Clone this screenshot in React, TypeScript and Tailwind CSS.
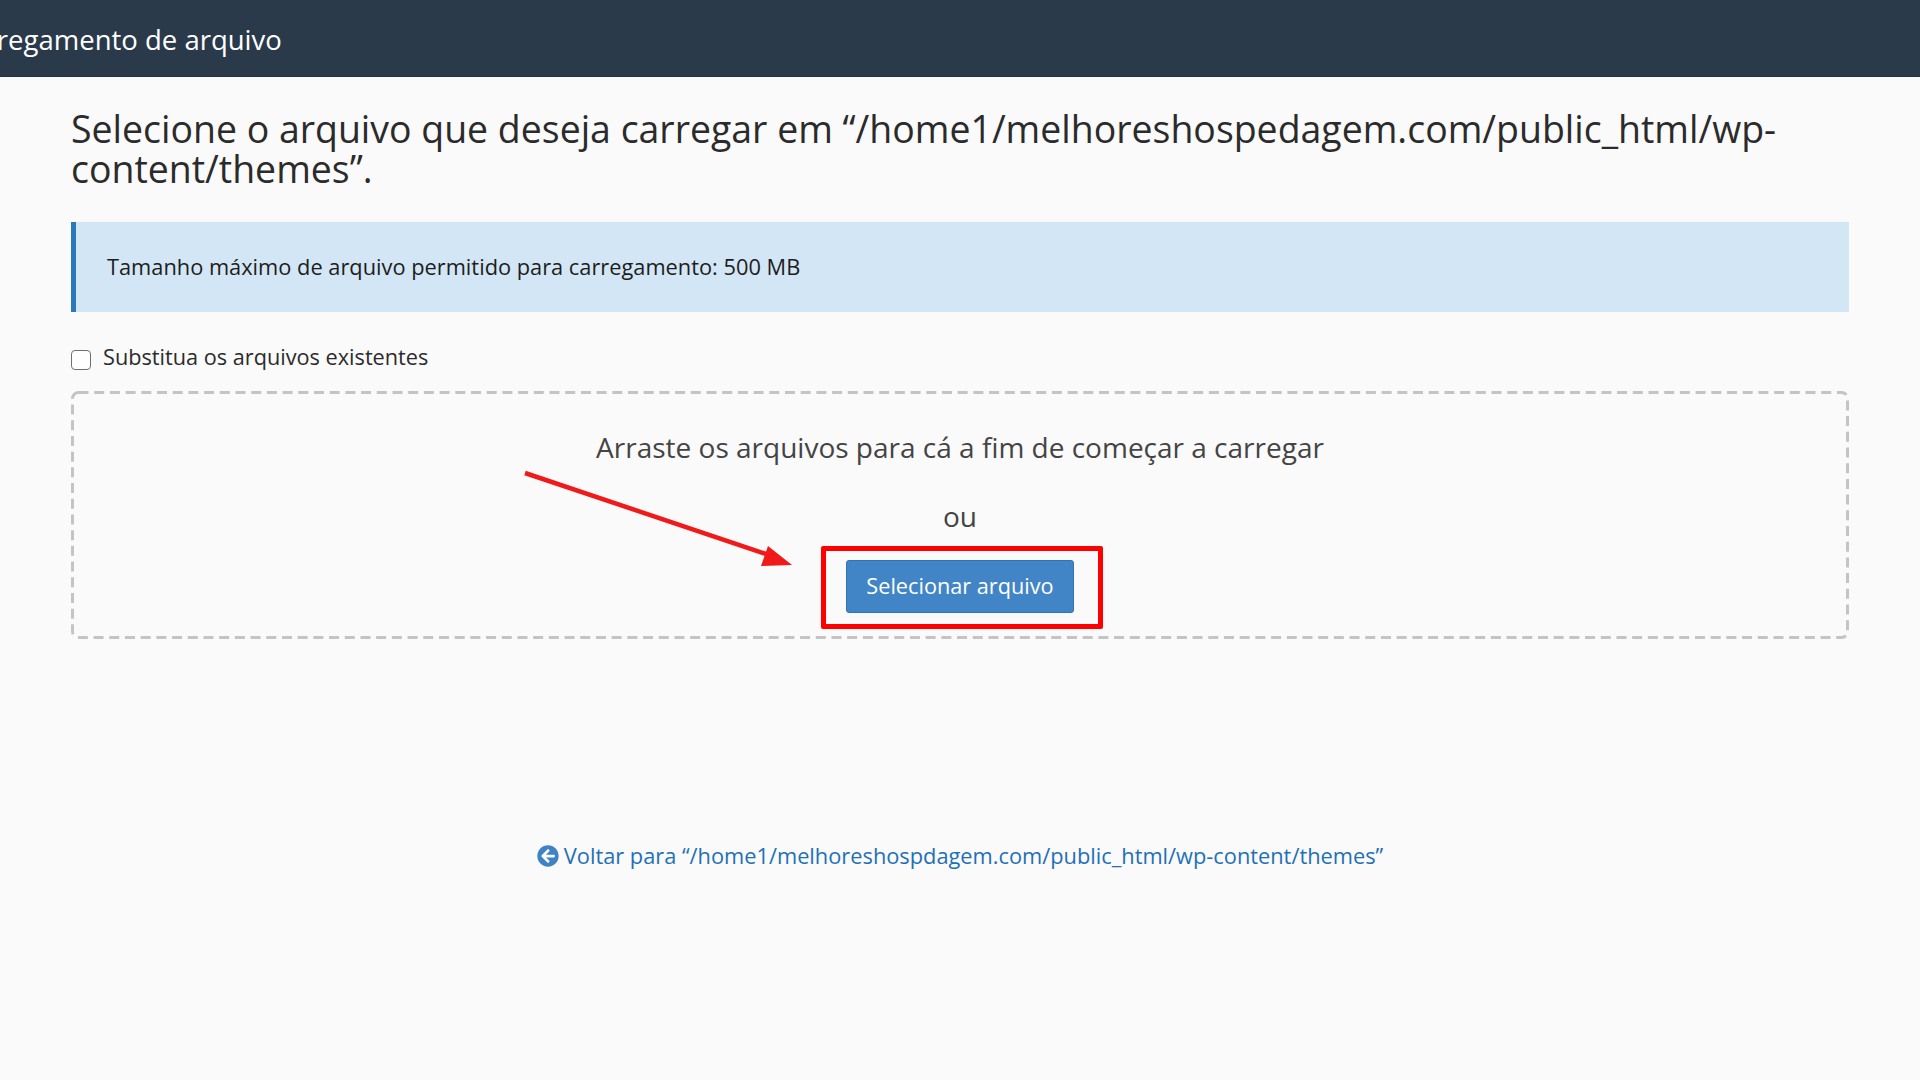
import { FaArrowCircleLeft } from 'react-icons/fa';

const font = { fontFamily: '"Open Sans", sans-serif' };

export default function App() {
    return (
        <div className="relative min-h-screen overflow-hidden bg-[#fafafa]" style={font}>
            <header className="flex h-[77px] items-center overflow-hidden border-b border-[#243444] bg-[#2a3a4b] pt-[4px]">
                <span className="-ml-[47px] whitespace-nowrap text-[27.5px] text-white">Carregamento de arquivo</span>
            </header>

            <main className="px-[71px]">
                <h1 className="mt-[32px] text-[37.45px] leading-[40px] text-[#2b2b2b]">
                    Selecione o arquivo que deseja carregar em “/home1/melhoreshospedagem.com/public_html/wp-content/themes”.
                </h1>

                <div className="mt-[33px] flex h-[90px] items-center border-l-[5px] border-[#2a7ab8] bg-[#d3e6f5] pl-[31px] text-[21.8px] text-[#1d1d1d]">
                    Tamanho máximo de arquivo permitido para carregamento: 500 MB
                </div>

                <label className="mt-[29px] flex h-[32px] items-center gap-[12px] text-[21.7px] text-[#2b2b2b]">
                    <span className="mt-[5px] h-[20px] w-[20px] rounded-[4px] border-[1.5px] border-[#6f6f6f] bg-white" />
                    Substitua os arquivos existentes
                </label>

                <section className="relative mt-[18px] flex h-[248px] flex-col items-center">
                    <svg className="absolute left-0 top-0" width="1778" height="248" fill="none">
                        <rect x="1.5" y="1.5" width="1775" height="245" rx="6" stroke="#c4c4c4" strokeWidth="3" strokeDasharray="10 5.7" />
                    </svg>
                    <p className="mt-[36px] text-[28px] leading-[40px] text-[#444444]">Arraste os arquivos para cá a fim de começar a carregar</p>
                    <p className="mt-[29px] text-[28px] leading-[40px] text-[#444444]">ou</p>
                    <button className="relative mt-[24px] h-[53px] w-[228px] rounded-[3px] border border-[#2f75b5] bg-[#4285c6] text-[21.7px] text-white">
                        Selecionar arquivo
                    </button>
                </section>

                <a className="mt-[202px] flex items-center justify-center gap-[5px] text-[21.8px] leading-[30px] text-[#1f70b8]">
                    <FaArrowCircleLeft className="h-[22px] w-[22px] text-[#3f83c6]" />
                    Voltar para “/home1/melhoreshospdagem.com/public_html/wp-content/themes”
                </a>
            </main>

            {/* annotations drawn over the screenshot */}
            <div className="absolute left-[821px] top-[546px] h-[83px] w-[282px] rounded-[2px] border-[5px] border-[#ff0000]" />
            <svg className="absolute left-0 top-0" width="1920" height="1080" viewBox="0 0 1920 1080" fill="none">
                <line x1="525" y1="473" x2="775" y2="557" stroke="#f01a1a" strokeWidth="4.5" />
                <polygon points="792,565 761,566 768,546" fill="#f01a1a" />
            </svg>
        </div>
    );
}
